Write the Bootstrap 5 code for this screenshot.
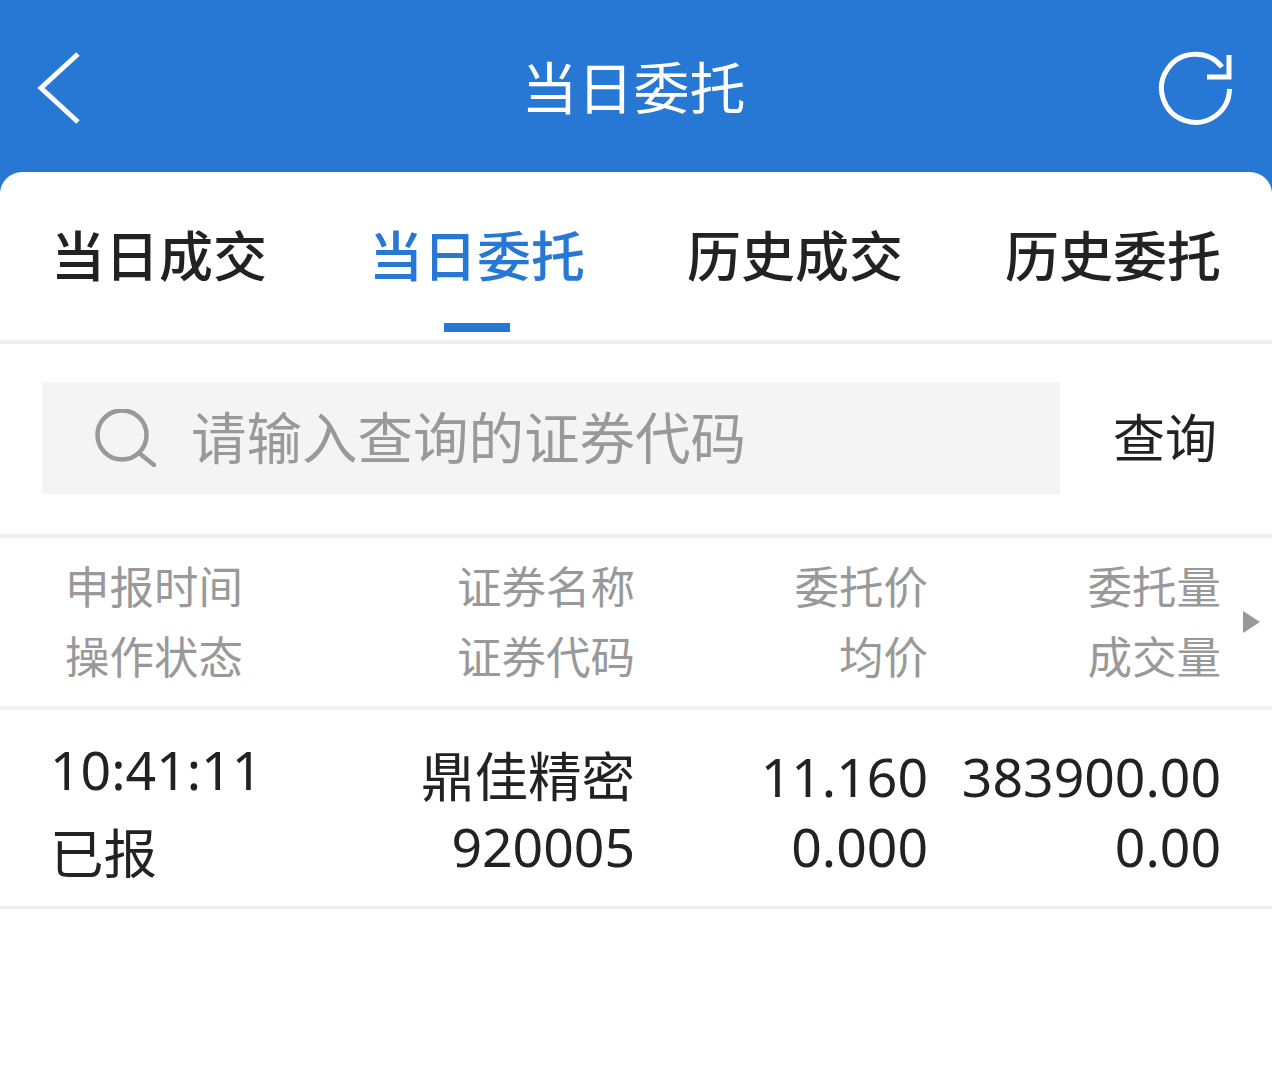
<!DOCTYPE html>
<html lang="zh-CN">
<head>
<meta charset="utf-8">
<title>当日委托</title>
<link href="https://cdn.jsdelivr.net/npm/bootstrap@5.3.0/dist/css/bootstrap.min.css" rel="stylesheet">
<style>
html,body{height:100%;}
body{background:#fff;color:#222;font-family:"Noto Sans","Noto Sans CJK SC",sans-serif;overflow:hidden;}
.top-bar{height:192px;background:#2777d5;color:#fff;padding:0 40px 18px 37px;}
.top-side{width:300px;}
.top-side svg{display:block;margin-top:2px;}
.top-title{font-size:56px;line-height:1;font-weight:400;margin:0;flex:1;text-align:center;padding-right:2px;}
.sheet{background:#fff;border-radius:22px 22px 0 0;margin-top:-20px;}
.tab-row{height:172px;border-bottom:4px solid #efefef;}
.tab-item{width:318px;font-size:54px;line-height:1;color:#222;text-decoration:none;position:relative;font-weight:500;}
.tab-item.active{color:#2777d5;}
.tab-item.active::after{content:"";position:absolute;left:126px;width:66px;height:9px;bottom:8px;background:#2777d5;}
.search-row{height:194px;border-bottom:4px solid #efefef;padding:0 55px 0 42px;}
.search-box{width:1018px;height:112px;background:#f4f4f4;padding-left:52px;gap:35px;margin-top:-2px;}
.search-ph{font-size:55.500px;line-height:1;color:#999;}
.search-btn{font-size:52px;line-height:1;color:#222;margin-top:-2px;}
.grid-row{display:grid;grid-template-columns:240px 343px 293px 293px 51px;padding-left:52px;align-items:center;}
.head-row{height:172px;border-bottom:4px solid #efefef;color:#999;font-size:44.500px;line-height:70px;}
.head-first{padding-left:13px;}
.data-row{height:199px;border-bottom:3px solid #efefef;font-size:53.500px;line-height:70px;color:#222;padding-top:7px;}
.time-cell{line-height:84px;margin-left:-2px;}
.arrow-cell{padding-left:22px;}
.arrow-tri{width:0;height:0;border-left:17px solid #999;border-top:11px solid transparent;border-bottom:11px solid transparent;}
</style>
</head>
<body>
<header class="top-bar d-flex align-items-center">
  <div class="top-side">
    <svg width="44" height="72" viewBox="0 0 44 72" fill="none" stroke="#fff" stroke-width="5" aria-hidden="true"><path d="M41 2 L4 36 L41 70"/></svg>
  </div>
  <h1 class="top-title">当日委托</h1>
  <div class="top-side d-flex justify-content-end">
    <svg width="74" height="74" viewBox="0 0 74 74" fill="none" stroke="#fff" stroke-width="5" aria-hidden="true"><path d="M71.500 38 A34 34 0 1 1 64 16"/><path d="M71 4 V26 H49"/></svg>
  </div>
</header>
<main class="sheet">
  <nav class="tab-row d-flex align-items-center">
    <a class="tab-item text-center" href="#">当日成交</a>
    <a class="tab-item active align-self-stretch d-flex align-items-center justify-content-center" href="#">当日委托</a>
    <a class="tab-item text-center" href="#">历史成交</a>
    <a class="tab-item text-center" href="#">历史委托</a>
  </nav>
  <div class="search-row d-flex align-items-center justify-content-between">
    <div class="search-box d-flex align-items-center">
      <svg width="62" height="58" viewBox="0 0 62 58" fill="none" stroke="#999" stroke-width="4.500" aria-hidden="true"><circle cx="28" cy="26" r="24.500"/><path d="M45 44 L60 56" stroke-linecap="round"/></svg>
      <span class="search-ph">请输入查询的证券代码</span>
    </div>
    <span class="search-btn">查询</span>
  </div>
  <div class="grid-row head-row">
    <div class="head-first">申报时间<br>操作状态</div>
    <div class="text-end">证券名称<br>证券代码</div>
    <div class="text-end">委托价<br>均价</div>
    <div class="text-end">委托量<br>成交量</div>
    <div class="arrow-cell d-flex align-items-center"><span class="arrow-tri"></span></div>
  </div>
  <div class="grid-row data-row">
    <div class="time-cell">10:41:11<br>已报</div>
    <div class="text-end">鼎佳精密<br>920005</div>
    <div class="text-end">11.160<br>0.000</div>
    <div class="text-end">383900.00<br>0.00</div>
  </div>
</main>
</body>
</html>
